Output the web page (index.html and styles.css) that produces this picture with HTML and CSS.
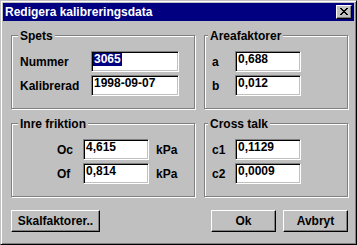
FILE: index.html
```html
<!DOCTYPE html>
<html>
<head>
<meta charset="utf-8">
<link rel="stylesheet" href="styles.css">
</head>
<body>
<div class="window">
  <div class="titlebar">
    <span class="title">Redigera kalibreringsdata</span>
    <div class="close-btn">
      <svg width="8" height="7" viewBox="0 0 8 7" shape-rendering="crispEdges">
        <path d="M0 0h2v1h-2zM6 0h2v1h-2zM1 1h2v1h-2zM5 1h2v1h-2zM2 2h4v1h-4zM3 3h2v1h-2zM2 4h4v1h-4zM1 5h2v1h-2zM5 5h2v1h-2zM0 6h2v1h-2zM6 6h2v1h-2z" fill="#000"/>
      </svg>
    </div>
  </div>
  <div class="content">
    <div class="row">
      <div class="group group-wide">
        <span class="group-title title-wide">Spets</span>
        <div class="fields">
          <div class="field-row spets-row">
            <span class="label spets-label">Nummer</span>
            <div class="edit edit-long"><span class="val sel">3065</span></div>
          </div>
          <div class="field-row spets-row">
            <span class="label spets-label">Kalibrerad</span>
            <div class="edit edit-long"><span class="val">1998-09-07</span></div>
          </div>
        </div>
      </div>
      <div class="group group-narrow">
        <span class="group-title title-narrow">Areafaktorer</span>
        <div class="fields">
          <div class="field-row small-row">
            <span class="label small-label">a</span>
            <div class="edit edit-short"><span class="val">0,688</span></div>
          </div>
          <div class="field-row small-row">
            <span class="label small-label">b</span>
            <div class="edit edit-short"><span class="val">0,012</span></div>
          </div>
        </div>
      </div>
    </div>
    <div class="row row-lower">
      <div class="group group-wide">
        <span class="group-title title-wide">Inre friktion</span>
        <div class="fields">
          <div class="field-row inre-row">
            <span class="label inre-label">Oc</span>
            <div class="edit edit-short"><span class="val">4,615</span></div>
            <span class="unit">kPa</span>
          </div>
          <div class="field-row inre-row">
            <span class="label inre-label">Of</span>
            <div class="edit edit-short"><span class="val">0,814</span></div>
            <span class="unit">kPa</span>
          </div>
        </div>
      </div>
      <div class="group group-narrow">
        <span class="group-title title-narrow">Cross talk</span>
        <div class="fields">
          <div class="field-row small-row">
            <span class="label small-label">c1</span>
            <div class="edit edit-short"><span class="val">0,1129</span></div>
          </div>
          <div class="field-row small-row">
            <span class="label small-label">c2</span>
            <div class="edit edit-short"><span class="val">0,0009</span></div>
          </div>
        </div>
      </div>
    </div>
    <div class="button-row">
      <div class="btn btn-scale">Skalfaktorer..</div>
      <div class="btn btn-ok">Ok</div>
      <div class="btn btn-cancel">Avbryt</div>
    </div>
  </div>
</div>
</body>
</html>
```
FILE: styles.css
```css
html, body {
  margin: 0;
  padding: 0;
  background: #c0c0c0;
}

body {
  font-family: "Liberation Sans", Arial, sans-serif;
  font-weight: bold;
  font-size: 12px;
  color: #000;
}

.window {
  box-sizing: border-box;
  width: 357px;
  height: 245px;
  background: #c0c0c0;
  border: 1px solid;
  border-color: #c0c0c0 #000 #000 #c0c0c0;
  box-shadow: inset 1px 1px 0 #fff, inset -1px -1px 0 #808080;
  padding: 2px;
  display: flex;
  flex-direction: column;
}

.titlebar {
  height: 18px;
  background: #000080;
  color: #fff;
  display: flex;
  align-items: center;
  padding: 0 2px;
}

.title {
  line-height: 18px;
  font-size: 12px;
}

.close-btn {
  margin-left: auto;
  box-sizing: border-box;
  width: 16px;
  height: 14px;
  background: #c0c0c0;
  border: 1px solid;
  border-color: #fff #000 #000 #fff;
  box-shadow: inset -1px -1px 0 #808080;
  display: flex;
  align-items: center;
  justify-content: center;
  padding: 0 1px 1px 0;
}

.close-btn svg {
  display: block;
}

.content {
  padding: 14px 0 0 8px;
  display: flex;
  flex-direction: column;
}

.row {
  display: flex;
  gap: 9px;
}

.row-lower {
  margin-top: 14px;
}

.group {
  box-sizing: border-box;
  height: 74px;
  border: 1px solid #808080;
  box-shadow: 1px 1px 0 #fff, inset 1px 1px 0 #fff;
  display: flex;
  flex-direction: column;
}

.group-wide {
  width: 184px;
}

.group-narrow {
  width: 144px;
}

.group-title {
  align-self: flex-start;
  margin-top: -7px;
  line-height: 14px;
  padding: 0 2px;
  background: #c0c0c0;
}

.title-wide {
  margin-left: 6px;
}

.title-narrow {
  margin-left: 3px;
}

.fields {
  margin-top: 8px;
  display: flex;
  flex-direction: column;
  gap: 3px;
}

.field-row {
  display: flex;
  align-items: center;
}

.label {
  line-height: 14px;
}

.spets-row {
  padding-left: 8px;
}

.spets-label {
  width: 71px;
}

.small-row {
  padding-left: 7px;
}

.small-label {
  width: 23px;
}

.inre-row {
  padding-left: 45px;
}

.inre-label {
  width: 26px;
}

.unit {
  margin-left: 7px;
  line-height: 14px;
}

.edit {
  box-sizing: border-box;
  height: 21px;
  background: #fff;
  border: 1px solid;
  border-color: #808080 #fff #fff #808080;
  box-shadow: inset 1px 1px 0 #000, inset -1px -1px 0 #c0c0c0;
  padding: 1px 0 0 1px;
  overflow: hidden;
  white-space: nowrap;
}

.edit-long {
  width: 88px;
}

.edit-short {
  width: 66px;
}

.val {
  display: inline-block;
  vertical-align: top;
  height: 13px;
  line-height: 13px;
  padding: 0 1px;
}

.sel {
  background: #000080;
  color: #fff;
}

.button-row {
  display: flex;
  margin-top: 13px;
}

.btn {
  box-sizing: border-box;
  height: 22px;
  background: #c0c0c0;
  border: 1px solid;
  border-color: #fff #000 #000 #fff;
  box-shadow: inset -1px -1px 0 #808080;
  display: flex;
  align-items: center;
  justify-content: center;
  line-height: 14px;
  padding-bottom: 1px;
}

.btn-scale {
  width: 89px;
}

.btn-ok {
  width: 65px;
  margin-left: 111px;
}

.btn-cancel {
  width: 65px;
  margin-left: 7px;
}
```
